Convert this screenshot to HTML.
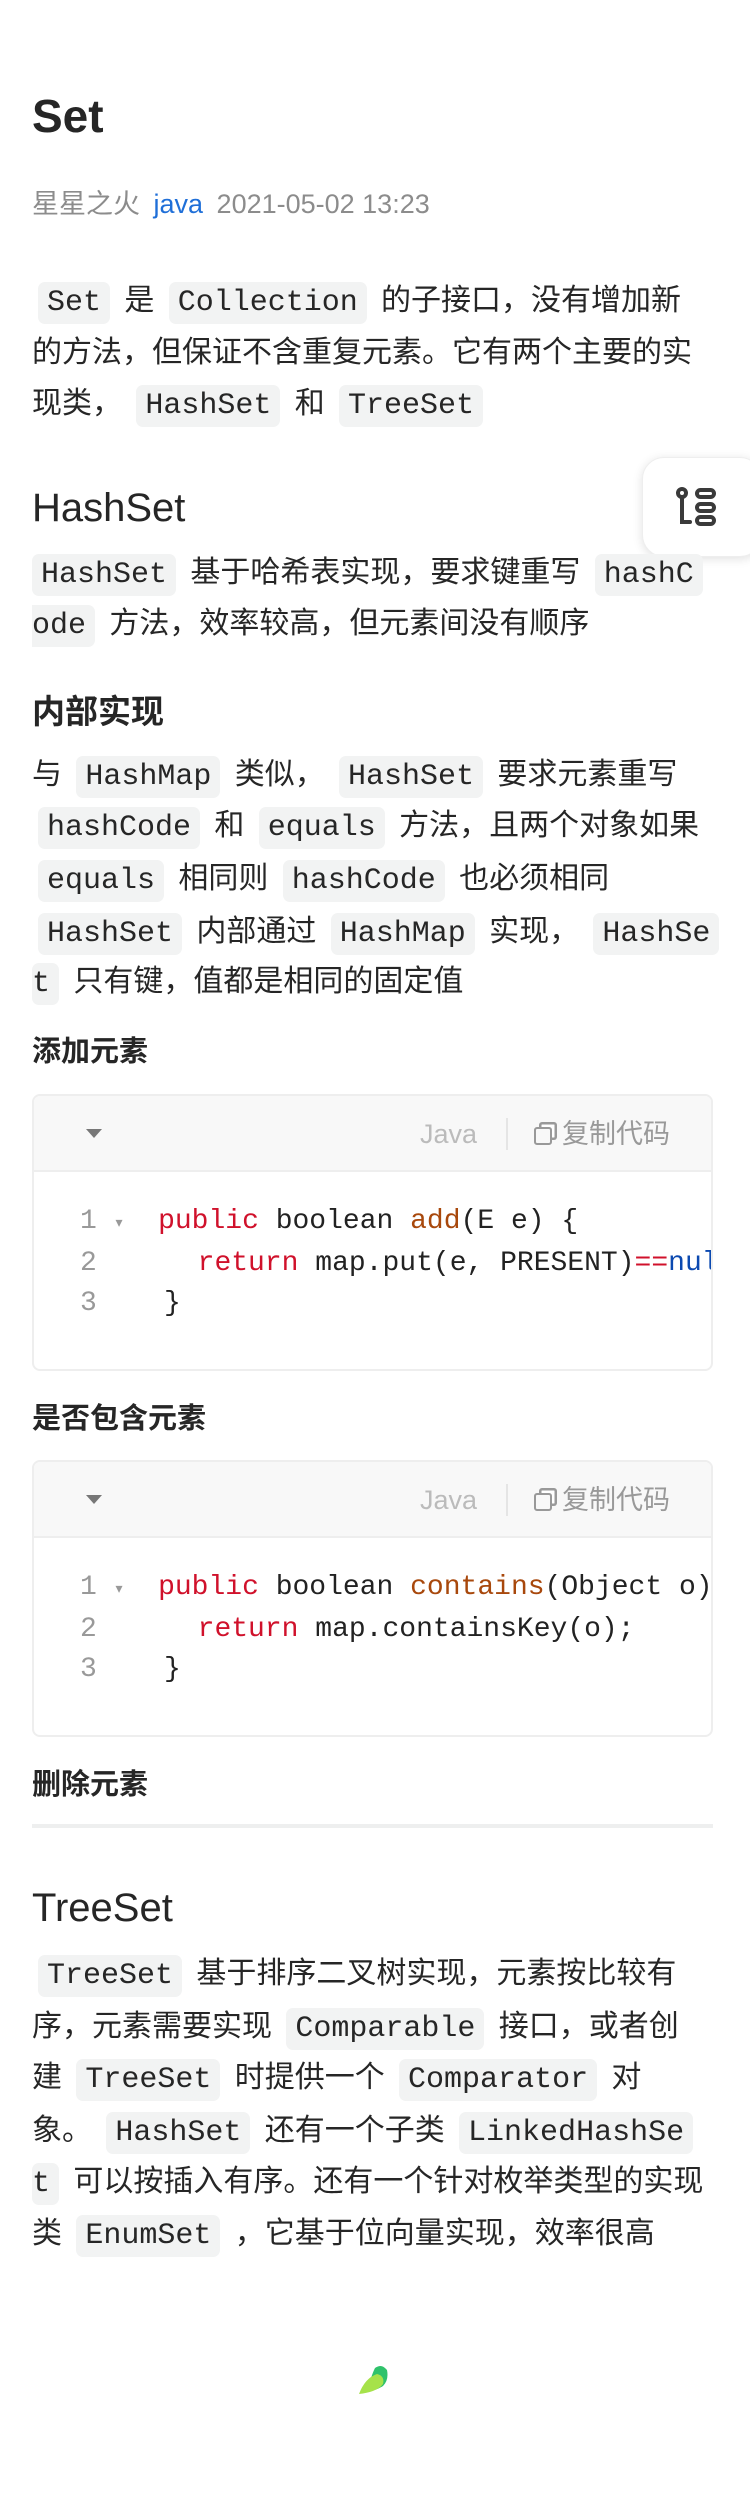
<!DOCTYPE html>
<html><head><meta charset="utf-8"><style>
*{margin:0;padding:0;box-sizing:border-box}
body{width:750px;height:2496px;background:#fff;position:relative;overflow:hidden;font-family:"Liberation Sans","Noto Sans CJK SC",sans-serif;color:#262626}
.a{position:absolute;left:32px;white-space:nowrap}
.p{font-size:30px;line-height:52px;height:52px}
code{font-family:"Liberation Mono","DejaVu Sans Mono",monospace;font-size:30px;background:#f2f3f3;border-radius:7px;padding:4px 9px;margin:0 6px;color:#262626}
code.l0{margin-left:0}
.h2{font-size:40px;font-weight:normal;color:#262626}
.h3{font-size:33px;font-weight:bold}
.h4{font-size:29px;font-weight:bold}
.cb{position:absolute;left:32px;width:681px;height:277px;border:2px solid #eeeeee;border-radius:8px;overflow:hidden;background:#fff}
.cb .hd{height:76px;background:#f8f8f8;border-bottom:2px solid #eee;position:relative}
.tri{position:absolute;left:52px;top:33px;width:0;height:0;border-left:8px solid transparent;border-right:8px solid transparent;border-top:9px solid #777}
.jv{position:absolute;left:386px;top:20px;font-size:27px;color:#bbb;line-height:36px}
.dv{position:absolute;left:472px;top:22px;width:2px;height:32px;background:#e5e5e5}
.cp{position:absolute;left:500px;top:20px;font-size:27px;color:#999;line-height:36px}
.cl{position:absolute;font-family:"Liberation Mono","DejaVu Sans Mono",monospace;font-size:28px;line-height:40px;white-space:pre;color:#222}
.n{color:#999}
.k{color:#d0112b}
.f{color:#a8480c}
.b{color:#0b49b0}
</style></head><body>

<div class="a" style="top:86px;font-size:46px;font-weight:bold;line-height:60px">Set</div>
<div class="a" style="top:187px;font-size:27px;line-height:34px;color:#8c8c8c">星星之火 <span style="color:#1f6fd8;margin:0 6px">java</span> 2021-05-02 13:23</div>

<div class="a p" style="top:275px"><code>Set</code> 是 <code>Collection</code> 的子接口，没有增加新</div>
<div class="a p" style="top:327px">的方法，但保证不含重复元素。它有两个主要的实</div>
<div class="a p" style="top:378px">现类， <code>HashSet</code> 和 <code>TreeSet</code></div>

<div style="position:absolute;left:642px;top:457px;width:120px;height:100px;background:#fff;border-radius:22px;box-shadow:0 2px 10px rgba(0,0,0,0.12);border:1px solid #eee">
<svg width="44" height="44" viewBox="0 0 44 44" style="position:absolute;left:31px;top:28px" fill="none" stroke="#3a3a3a" stroke-width="4" stroke-linecap="round">
<circle cx="8" cy="7" r="4"/><path d="M8 11v25h8"/>
<rect x="23" y="4" width="17" height="7" rx="3.5"/><rect x="23" y="18" width="17" height="7" rx="3.5"/><rect x="23" y="31" width="17" height="7" rx="3.5"/>
</svg></div>

<div class="a h2" style="top:482px;line-height:52px">HashSet</div>
<div class="a p" style="top:547px"><code class="l0">HashSet</code> 基于哈希表实现，要求键重写 <code>hashC</code></div>
<div class="a p" style="top:598px"><code class="l0" style="border-radius:0 7px 7px 0;padding-left:0">ode</code> 方法，效率较高，但元素间没有顺序</div>

<div class="a h3" style="top:690px;line-height:44px">内部实现</div>
<div class="a p" style="top:749px">与 <code>HashMap</code> 类似， <code>HashSet</code> 要求元素重写</div>
<div class="a p" style="top:800px"><code>hashCode</code> 和 <code>equals</code> 方法，且两个对象如果</div>
<div class="a p" style="top:853px"><code>equals</code> 相同则 <code>hashCode</code> 也必须相同</div>
<div class="a p" style="top:906px"><code>HashSet</code> 内部通过 <code>HashMap</code> 实现， <code>HashSe</code></div>
<div class="a p" style="top:956px"><code class="l0" style="padding-left:0">t</code> 只有键，值都是相同的固定值</div>

<div class="a h4" style="top:1033px;line-height:38px">添加元素</div>
<div class="cb" style="top:1094px"><div class="hd"><div class="tri"></div><div class="jv">Java</div><div class="dv"></div><div class="cp"><span style="display:inline-block;width:18px;height:18px;border:2.5px solid #999;border-radius:3px;margin-right:10px;position:relative;top:2px;box-shadow:5px -5px 0 -2.5px #fff,5px -5px 0 0 #999"></span>复制代码</div></div>
<div class="cl" style="left:46px;top:106px"><span class="n">1 <span style="font-size:18px">▾</span></span>  <span class="k">public</span> boolean <span class="f">add</span>(E e) {
<span class="n">2</span>      <span class="k">return</span> map.put(e, PRESENT)<span class="k">==</span><span class="b">null</span>;
<span class="n">3</span>    }</div></div>

<div class="a h4" style="top:1400px;line-height:38px">是否包含元素</div>
<div class="cb" style="top:1460px"><div class="hd"><div class="tri"></div><div class="jv">Java</div><div class="dv"></div><div class="cp"><span style="display:inline-block;width:18px;height:18px;border:2.5px solid #999;border-radius:3px;margin-right:10px;position:relative;top:2px;box-shadow:5px -5px 0 -2.5px #fff,5px -5px 0 0 #999"></span>复制代码</div></div>
<div class="cl" style="left:46px;top:106px"><span class="n">1 <span style="font-size:18px">▾</span></span>  <span class="k">public</span> boolean <span class="f">contains</span>(Object o) {
<span class="n">2</span>      <span class="k">return</span> map.containsKey(o);
<span class="n">3</span>    }</div></div>

<div class="a h4" style="top:1766px;line-height:38px">删除元素</div>
<div style="position:absolute;left:32px;top:1824px;width:681px;height:4px;background:#eeefef"></div>

<div class="a h2" style="top:1882px;line-height:52px">TreeSet</div>
<div class="a p" style="top:1948px"><code>TreeSet</code> 基于排序二叉树实现，元素按比较有</div>
<div class="a p" style="top:2001px">序，元素需要实现 <code>Comparable</code> 接口，或者创</div>
<div class="a p" style="top:2052px">建 <code>TreeSet</code> 时提供一个 <code>Comparator</code> 对</div>
<div class="a p" style="top:2105px">象。 <code>HashSet</code> 还有一个子类 <code>LinkedHashSe</code></div>
<div class="a p" style="top:2156px"><code class="l0" style="padding-left:0">t</code> 可以按插入有序。还有一个针对枚举类型的实现</div>
<div class="a p" style="top:2208px">类 <code>EnumSet</code> ，它基于位向量实现，效率很高</div>

<svg width="40" height="36" viewBox="0 0 40 36" style="position:absolute;left:355px;top:2362px">
<path d="M20 6 Q26 2 30 6 L32 8 Q34 18 28 24 Q22 28 12 30 Q16 14 20 6Z" fill="#2fc26b"/>
<path d="M4 32 Q10 16 22 12 Q30 14 28 22 Q22 30 4 32Z" fill="#a6e24a"/>
</svg>
</body></html>
